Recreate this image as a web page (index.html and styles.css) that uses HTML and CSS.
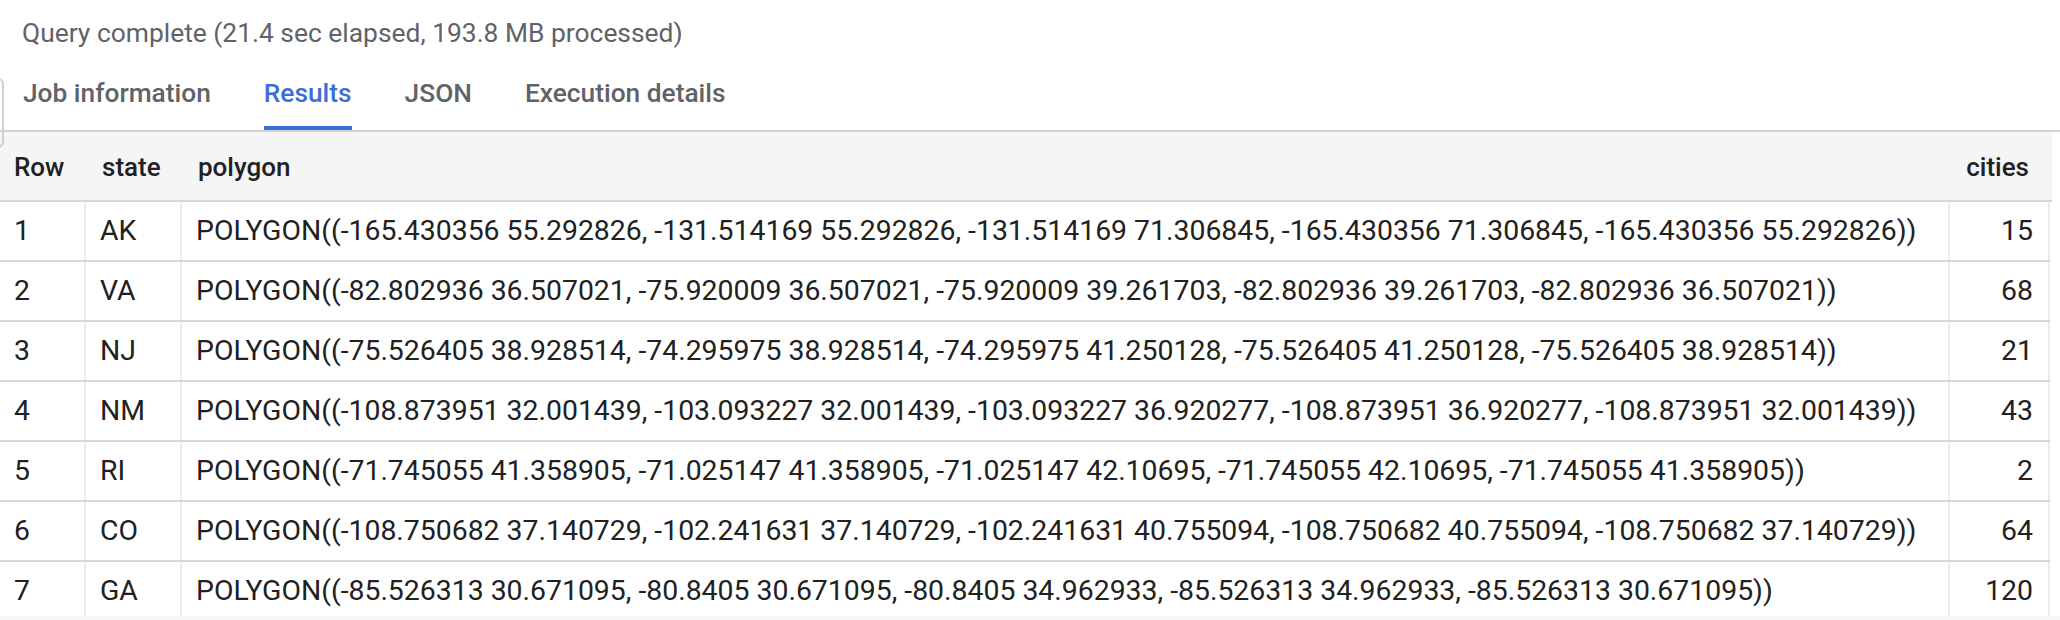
FILE: index.html
```html
<!DOCTYPE html>
<html lang="en">
<head>
<meta charset="utf-8">
<title>Query results</title>
<link rel="stylesheet" href="styles.css">
</head>
<body>
<div class="page">
  <div class="status">Query complete (21.4 sec elapsed, 193.8 MB processed)</div>
  <nav class="tabs">
    <span class="tab">Job information</span>
    <span class="tab active">Results</span>
    <span class="tab">JSON</span>
    <span class="tab">Execution details</span>
  </nav>
  <div class="results">
    <div class="row head">
      <div class="cell">Row</div>
      <div class="cell">state</div>
      <div class="cell">polygon</div>
      <div class="cell num">cities</div>
    </div>
    <div class="row">
      <div class="cell">1</div>
      <div class="cell">AK</div>
      <div class="cell">POLYGON((-165.430356 55.292826, -131.514169 55.292826, -131.514169 71.306845, -165.430356 71.306845, -165.430356 55.292826))</div>
      <div class="cell num">15</div>
    </div>
    <div class="row">
      <div class="cell">2</div>
      <div class="cell">VA</div>
      <div class="cell">POLYGON((-82.802936 36.507021, -75.920009 36.507021, -75.920009 39.261703, -82.802936 39.261703, -82.802936 36.507021))</div>
      <div class="cell num">68</div>
    </div>
    <div class="row">
      <div class="cell">3</div>
      <div class="cell">NJ</div>
      <div class="cell">POLYGON((-75.526405 38.928514, -74.295975 38.928514, -74.295975 41.250128, -75.526405 41.250128, -75.526405 38.928514))</div>
      <div class="cell num">21</div>
    </div>
    <div class="row">
      <div class="cell">4</div>
      <div class="cell">NM</div>
      <div class="cell">POLYGON((-108.873951 32.001439, -103.093227 32.001439, -103.093227 36.920277, -108.873951 36.920277, -108.873951 32.001439))</div>
      <div class="cell num">43</div>
    </div>
    <div class="row">
      <div class="cell">5</div>
      <div class="cell">RI</div>
      <div class="cell">POLYGON((-71.745055 41.358905, -71.025147 41.358905, -71.025147 42.10695, -71.745055 42.10695, -71.745055 41.358905))</div>
      <div class="cell num">2</div>
    </div>
    <div class="row">
      <div class="cell">6</div>
      <div class="cell">CO</div>
      <div class="cell">POLYGON((-108.750682 37.140729, -102.241631 37.140729, -102.241631 40.755094, -108.750682 40.755094, -108.750682 37.140729))</div>
      <div class="cell num">64</div>
    </div>
    <div class="row">
      <div class="cell">7</div>
      <div class="cell">GA</div>
      <div class="cell">POLYGON((-85.526313 30.671095, -80.8405 30.671095, -80.8405 34.962933, -85.526313 34.962933, -85.526313 30.671095))</div>
      <div class="cell num">120</div>
    </div>
  </div>
  <div class="edge"></div>
  <div class="track"></div>
</div>
</body>
</html>
```
FILE: styles.css
```css
html, body {
  margin: 0;
  padding: 0;
  background: #ffffff;
}
body {
  font-family: Roboto, "Liberation Sans", Arial, sans-serif;
  color: #212121;
  overflow: hidden;
}
.page {
  position: relative;
  width: 2060px;
  height: 620px;
  overflow: hidden;
}
.status {
  padding: 18px 0 0 22px;
  font-size: 26.4px;
  line-height: 30px;
  color: #5f6368;
  white-space: nowrap;
}
.tabs {
  display: flex;
  gap: 53px;
  padding-left: 23px;
  border-bottom: 2px solid #d4d4d4;
}
.tab {
  padding: 29px 0 17px;
  font-size: 26.3px;
  font-weight: 500;
  line-height: 32px;
  color: #5f6368;
  border-bottom: 4px solid transparent;
  white-space: nowrap;
}
.tab.active {
  color: #3b6fd6;
  border-bottom-color: #3b6fd6;
}
.results {
  width: 2052px;
}
.row {
  display: grid;
  grid-template-columns: 86px 96px 1768px 100px;
  border-bottom: 2px solid #d8d8d8;
  width: 2050px;
}
.cell {
  box-sizing: border-box;
  padding: 0 14px;
  height: 58px;
  font-size: 28.4px;
  line-height: 58px;
  white-space: nowrap;
  overflow: hidden;
  border-right: 2px solid #ececec;
  color: #212121;
}
.cell.num {
  text-align: right;
  padding-right: 15px;
}
.row.head {
  width: 2052px;
  grid-template-columns: 86px 96px 1768px 102px;
  background: #f5f5f5;
}
.row.head .cell {
  height: 68px;
  line-height: 68px;
  padding-top: 1px;
  font-size: 26px;
  font-weight: 500;
  border-right: none;
  color: #202124;
}
.row.head .cell:first-child { padding-left: 14px; }
.row.head .cell:nth-child(2) { padding-left: 16px; }
.row.head .cell:nth-child(3) { padding-left: 16px; }
.row.head .cell.num { padding-right: 23px; }
.edge {
  position: absolute;
  left: -20px;
  top: 78px;
  width: 20px;
  height: 66px;
  border: 2px solid #cfcfcf;
  border-radius: 6px;
}
.track {
  position: absolute;
  left: 0;
  right: 0;
  bottom: 0;
  height: 4px;
  background: #f7f7f7;
}
```
